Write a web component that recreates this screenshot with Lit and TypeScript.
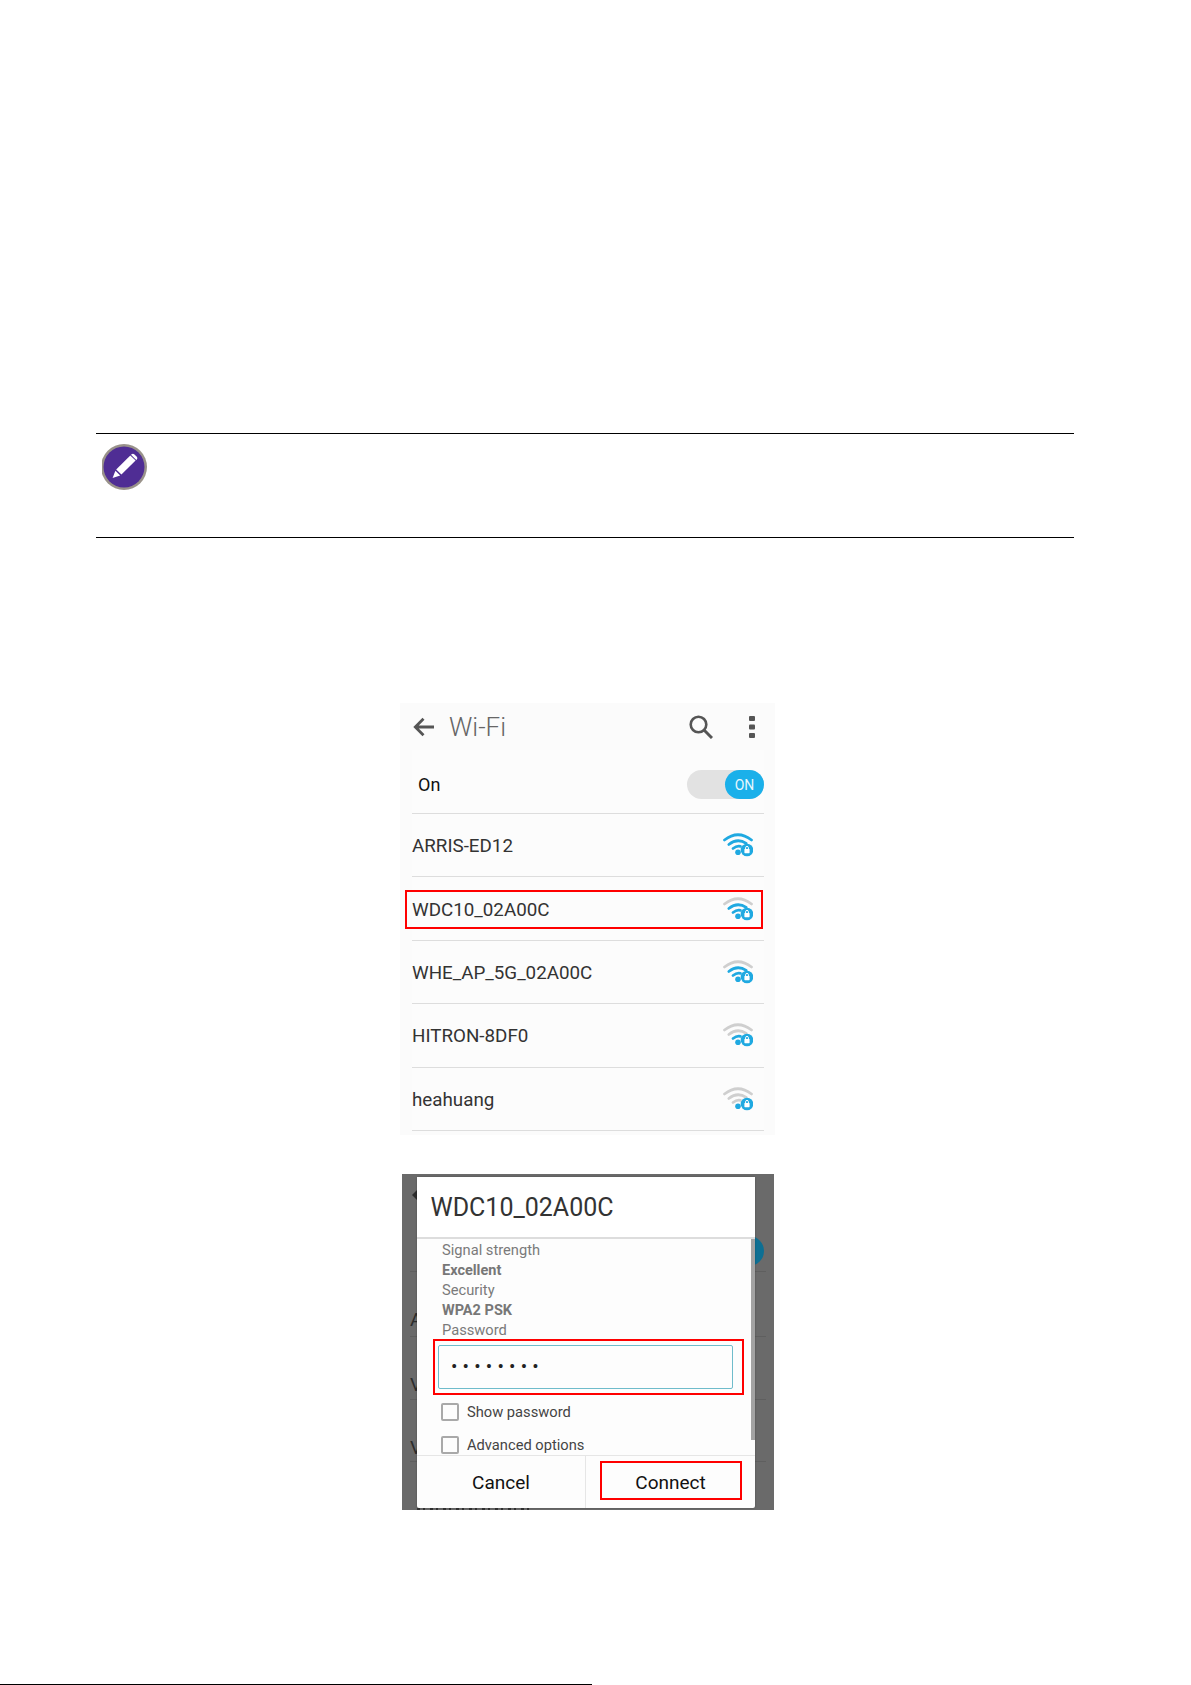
import { LitElement, html, css, svg } from "lit";
import { customElement } from "lit/decorators.js";

const BLUE = "#1fa9e1";
const GREY = "#cfcfcf";

function wifi(level: number) {
  const c = (n: number) => (level >= n ? BLUE : GREY);
  return svg`<svg class="wifi" viewBox="0 0 30 24" width="30" height="24" aria-hidden="true">
    <path d="M1.5 7 Q15 -3.5 28.5 7" fill="none" stroke="${c(3)}" stroke-width="2.8" stroke-linecap="round"/>
    <path d="M5.8 11.5 Q14.5 4.6 23.2 10.4" fill="none" stroke="${c(2)}" stroke-width="2.8" stroke-linecap="round"/>
    <path d="M10 15.5 Q14 12.4 17.5 13.4" fill="none" stroke="${c(1)}" stroke-width="2.8" stroke-linecap="round"/>
    <circle cx="15" cy="19.3" r="2.8" fill="${BLUE}"/>
    <circle cx="24" cy="17" r="6.3" fill="${BLUE}"/>
    <rect x="21.4" y="16" width="5.2" height="4.2" rx=".6" fill="#fff"/>
    <path d="M22.6 16.2 V14.8 a1.4 1.4 0 0 1 2.8 0 V16.2" fill="none" stroke="#fff" stroke-width="1"/>
  </svg>`;
}

const nets: [string, number, boolean][] = [
  ["ARRIS-ED12", 3, false],
  ["WDC10_02A00C", 2, true],
  ["WHE_AP_5G_02A00C", 2, false],
  ["HITRON-8DF0", 1, false],
  ["heahuang", 0, false],
];

@customElement("app-root")
export class AppRoot extends LitElement {
  static styles = css`
    :host {
      display: block;
      width: 1191px;
      height: 1685px;
      overflow: hidden;
      background: #fff;
      font-family: Roboto, "Liberation Sans", sans-serif;
      position: relative;
    }
    .note {
      box-sizing: border-box;
      margin: 433px 117px 0 96px;
      height: 105px;
      border-top: 1px solid #000;
      border-bottom: 1px solid #000;
      padding: 10px 0 0 6px;
    }
    .badge {
      display: block;
      filter: blur(0.5px);
    }
    .phone1 {
      margin: 165px 0 0 400px;
      width: 375px;
      height: 432px;
      background: #fbfbfb;
      display: flex;
      flex-direction: column;
    }
    .appbar {
      height: 47px;
      flex: none;
      display: flex;
      align-items: center;
      padding: 0 20px 0 13px;
      color: #555;
    }
    .appbar .title {
      font-size: 26px;
      font-weight: 300;
      margin-left: 14px;
      color: #666;
      flex: 1;
    }
    .appbar .search { margin-right: 36px; }
    .list { margin: 0 11px 0 12px; background: #fcfcfc; }
    .on {
      height: 64px;
      box-sizing: border-box;
      padding: 6px 0 0 6px;
      border-bottom: 1px solid #ddd;
      display: flex;
      align-items: center;
      justify-content: space-between;
      font-size: 18px;
      color: #111;
    }
    .toggle {
      width: 77px;
      height: 29px;
      border-radius: 15px;
      background: #e2e2e2;
      display: flex;
      justify-content: flex-end;
    }
    .knob {
      width: 39px;
      height: 29px;
      border-radius: 15px;
      background: #1ab0ea;
      color: #e8f7fd;
      font-size: 14px;
      display: flex;
      align-items: center;
      justify-content: center;
    }
    .net {
      position: relative;
      height: 63.4px;
      box-sizing: border-box;
      border-bottom: 1px solid #ddd;
      display: flex;
      align-items: center;
      justify-content: space-between;
      padding-right: 11px;
      font-size: 18.8px;
      color: #333;
    }
    .net span { margin-top: 2px; }
    .net.sel::after {
      content: "";
      position: absolute;
      left: -7px;
      right: 1px;
      top: 13px;
      height: 35px;
      border: 2px solid #f00;
    }
    .phone2 {
      position: relative;
      margin: 39px 0 0 402px;
      width: 372px;
      height: 336px;
      background: #6a6a6a;
      overflow: hidden;
    }
    .behind { color: #2c2c2c; font-size: 19px; }
    .behind span, .behind i { position: absolute; font-style: normal; font-weight: 400; }
    .behind .rule { height: 1px; background: #5f5f5f; left: 8px; right: 8px; }
    .behind .dot { width: 30px; height: 30px; border-radius: 50%; background: #0d6f93; left: 332px; top: 62px; }
    .behind .arrow {
      left: 10px;
      top: 15px;
      width: 0;
      height: 0;
      border: 6px solid transparent;
      border-right-color: #2c2c2c;
      border-left-width: 0;
    }
    .behind .sliver {
      left: 15px;
      top: 334px;
      width: 113px;
      height: 2px;
      background: repeating-linear-gradient(90deg, #333 0 3px, #6a6a6a 3px 6px, #333 6px 8px, #6a6a6a 8px 13px);
    }
    .dialog {
      position: absolute;
      left: 15px;
      top: 3px;
      width: 338px;
      height: 331px;
      background: #fdfdfd;
      border-radius: 2px;
      display: flex;
      flex-direction: column;
      box-shadow: 0 0 2px rgba(0,0,0,.3);
    }
    .dhead {
      height: 62px;
      flex: none;
      padding: 0 0 0 13.5px;
      display: flex;
      align-items: center;
      font-size: 25px;
      color: #333;
      border-bottom: 2px solid #ddd;
      box-sizing: border-box;
      background: #fff;
    }
    .dbody {
      position: relative;
      flex: 1;
      overflow: hidden;
      padding: 1px 0 0 25px;
      font-size: 14.7px;
      line-height: 20px;
      color: #7a7a7a;
    }
    .dbody div, .dbody b { height: 20px; }
    .dbody b { font-weight: 700; color: #777; display: block; font-size: 14.5px; line-height: 21px; }
    .dbody .pw {
      position: relative;
      margin: 5px 0 0 -4px;
      height: 42px;
      border: 1px solid #6fbccb;
      border-radius: 2px;
      padding-left: 12px;
      width: 281px;
      display: flex;
      align-items: center;
      color: #222;
      font-size: 19px;
      letter-spacing: 5.2px;
    }
    .pw::after {
      content: "";
      position: absolute;
      left: -6px;
      right: -12px;
      top: -7px;
      bottom: -7px;
      border: 2px solid #f00;
    }
    .dbody .chk {
      display: flex;
      align-items: center;
      gap: 8px;
      height: 18px;
      margin: 14px 0 0 -1px;
      color: #444;
      font-size: 14.7px;
    }
    .dbody .chk + .chk { margin-top: 15px; }
    .box {
      width: 14px;
      height: 14px;
      border: 2px solid #a9a9a9;
      border-radius: 2px;
      flex: none;
    }
    .dbody .bar {
      position: absolute;
      right: 0;
      top: 0;
      width: 4px;
      height: 201px;
      background: #a3a3a3;
    }
    .dfoot {
      height: 53px;
      flex: none;
      display: flex;
      border-top: 1px solid #e6e6e6;
      font-size: 19px;
      color: #111;
      box-sizing: border-box;
    }
    .dfoot > div {
      display: flex;
      align-items: center;
      justify-content: center;
      position: relative;
      width: 168px;
    }
    .dfoot > div + div {
      border-left: 1px solid #e6e6e6;
      width: 169px;
    }
    .dfoot .go::after {
      content: "";
      position: absolute;
      left: 14px;
      right: 13px;
      top: 5px;
      height: 35px;
      border: 2px solid #f00;
    }
    .foot {
      position: absolute;
      left: 0;
      bottom: 0;
      width: 592px;
      height: 1px;
      background: #000;
    }
  `;

  render() {
    return html`
      <section class="note">
        <svg class="badge" width="46" height="46" viewBox="0 0 46 46" aria-hidden="true">
          <circle cx="22" cy="23" r="23" fill="#6d6459" opacity=".7"/>
          <circle cx="22" cy="23" r="20.5" fill="#4f2d94"/>
          <path d="M28.3 11.5 L33.6 16.6 L19.4 30.6 L14.2 25.5 Z" fill="#fff"/>
          <path d="M29.6 10.2 a2 2 0 0 1 2.6 0 l2.6 2.5 a2 2 0 0 1 0 2.7 l-.5 .5 L29 10.8 Z" fill="#fff"/>
          <path d="M13.4 26.8 L18.2 31.5 L10.6 34 Z" fill="#fff"/>
        </svg>
      </section>

      <section class="phone1">
        <div class="appbar">
          <svg width="22" height="20" viewBox="0 0 22 20" aria-hidden="true">
            <path d="M21 10 H3 M10.5 1.8 L2.3 10 L10.5 18.2" fill="none" stroke="#555" stroke-width="2.8"/>
          </svg>
          <span class="title">Wi-Fi</span>
          <svg class="search" width="24" height="24" viewBox="0 0 24 24" aria-hidden="true">
            <circle cx="9.5" cy="9.5" r="7.8" fill="none" stroke="#555" stroke-width="2.6"/>
            <path d="M15 15 L23 23" stroke="#555" stroke-width="3"/>
          </svg>
          <svg width="6" height="22" viewBox="0 0 6 22" aria-hidden="true">
            <rect x="0" y="0" width="6" height="5" rx="1" fill="#555"/>
            <rect x="0" y="8.5" width="6" height="5" rx="1" fill="#555"/>
            <rect x="0" y="17" width="6" height="5" rx="1" fill="#555"/>
          </svg>
        </div>
        <div class="list">
          <div class="on"><span>On</span><div class="toggle"><div class="knob">ON</div></div></div>
          ${nets.map(
            ([n, l, s]) => html`<div class="net ${s ? "sel" : ""}"><span>${n}</span>${wifi(l)}</div>`
          )}
        </div>
      </section>

      <section class="phone2">
        <div class="behind">
          <i class="arrow"></i>
          <i class="dot"></i>
          <i class="rule" style="top:97px"></i>
          <i class="rule" style="top:162px"></i>
          <i class="rule" style="top:225px"></i>
          <i class="rule" style="top:287px"></i>
          <span style="left:8px;top:134px">A</span>
          <span style="left:8px;top:199px">V</span>
          <span style="left:8px;top:262px">V</span>
          <i class="sliver"></i>
        </div>
        <div class="dialog">
          <div class="dhead">WDC10_02A00C</div>
          <div class="dbody">
            <div>Signal strength</div>
            <b>Excellent</b>
            <div>Security</div>
            <b>WPA2 PSK</b>
            <div>Password</div>
            <div class="pw">••••••••</div>
            <div class="chk"><i class="box"></i><span>Show password</span></div>
            <div class="chk"><i class="box"></i><span>Advanced options</span></div>
            <div class="bar"></div>
          </div>
          <div class="dfoot">
            <div>Cancel</div>
            <div class="go">Connect</div>
          </div>
        </div>
      </section>

      <div class="foot"></div>
    `;
  }
}
